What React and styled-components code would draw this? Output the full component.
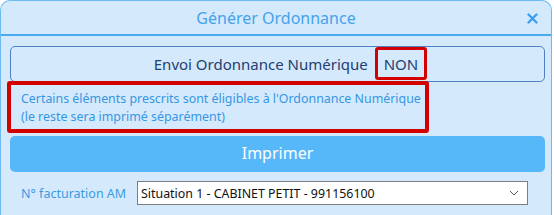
import React from 'react'
import styled, { createGlobalStyle } from 'styled-components'

const Global = createGlobalStyle`
  html, body { margin: 0; padding: 0; background: #ffffff; }
  body { font-family: "Noto Sans", "Open Sans", sans-serif; }
`

const Window = styled.div`
  box-sizing: border-box;
  width: 552px;
  height: 215px;
  background: #d5e9fd;
  border: 1px solid #6cbcf3;
  border-bottom: none;
  border-radius: 10px 10px 0 0;
  overflow: hidden;
`

const Header = styled.div`
  position: relative;
  height: 33px;
  display: flex;
  align-items: center;
  justify-content: center;
  border-bottom: 2px solid #47a9ee;
`

const Title = styled.span`
  font-size: 16px;
  color: #44a3ea;
`

const Close = styled.button`
  position: absolute;
  right: 12px;
  top: 10px;
  width: 14px;
  height: 14px;
  padding: 0;
  border: none;
  background: transparent;
  display: flex;
  align-items: center;
  justify-content: center;
`

const Body = styled.div`
  padding: 10px 6px 0 9px;
  display: flex;
  flex-direction: column;
`

const Mode = styled.div`
  box-sizing: border-box;
  height: 36px;
  border: 1px solid #4f82c4;
  border-radius: 5px;
  padding-left: 26px;
  display: flex;
  align-items: center;
  justify-content: center;
  gap: 7px;
  font-size: 15px;
  color: #23406f;
`

const Flag = styled.span`
  box-sizing: border-box;
  height: 33px;
  margin-top: -1px;
  padding: 0 6px;
  display: flex;
  align-items: center;
  border: 3px solid #d30000;
  border-radius: 3px;
`

const Notice = styled.div`
  box-sizing: border-box;
  width: 422px;
  margin: -1px 0 0 -3px;
  height: 52px;
  border: 4px solid #d30000;
  border-radius: 3px;
  padding: 5px 0 0 10px;
  font-size: 12.4px;
  line-height: 18px;
  color: #3497e3;
`

const PrintButton = styled.button`
  box-sizing: border-box;
  margin-top: 3px;
  height: 36px;
  padding: 0 0 2px;
  border: none;
  border-radius: 5px;
  background: #56b8f8;
  color: #ffffff;
  font-family: inherit;
  font-size: 16px;
`

const Row = styled.div`
  margin-top: 9px;
  display: flex;
  align-items: center;
  padding-left: 11px;
`

const Label = styled.span`
  width: 116px;
  font-size: 12.5px;
  color: #3a9be2;
`

const Select = styled.div`
  box-sizing: border-box;
  width: 391px;
  height: 24px;
  background: #ffffff;
  border: 1px solid #7d7d7d;
  display: flex;
  align-items: center;
  justify-content: space-between;
  padding: 0 8px 0 3px;
  font-size: 12.4px;
  color: #111111;
`

export default function App() {
  return (
    <>
      <Global />
      <Window>
        <Header>
          <Title>Générer Ordonnance</Title>
          <Close aria-label="Fermer">
            <svg width="11" height="11" viewBox="0 0 11 11">
              <path d="M1.5 1.5 L9.5 9.5 M9.5 1.5 L1.5 9.5" stroke="#3a9ff0" strokeWidth="2.4" strokeLinecap="round" />
            </svg>
          </Close>
        </Header>
        <Body>
          <Mode>
            <span>Envoi Ordonnance Numérique</span>
            <Flag>NON</Flag>
          </Mode>
          <Notice>
            Certains éléments prescrits sont éligibles à l'Ordonnance Numérique
            <br />
            (le reste sera imprimé séparément)
          </Notice>
          <PrintButton>Imprimer</PrintButton>
          <Row>
            <Label>N° facturation AM</Label>
            <Select>
              <span>Situation 1 - CABINET PETIT - 991156100</span>
              <svg width="10" height="6" viewBox="0 0 10 6">
                <path d="M1 1 L5 5 L9 1" fill="none" stroke="#555" strokeWidth="1" />
              </svg>
            </Select>
          </Row>
        </Body>
      </Window>
    </>
  )
}
